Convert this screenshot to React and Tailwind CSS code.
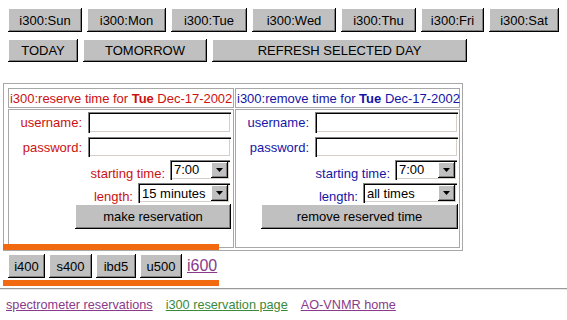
import React from 'react';

const btnCls =
  "flex items-center justify-center bg-[#c0c0c0] text-[13px] leading-none text-black shadow-[inset_-1px_-1px_0_#000,inset_1px_1px_0_#fff,inset_-2px_-2px_0_#808080]";

const fieldCls =
  "bg-white shadow-[inset_1px_1px_0_#808080,inset_2px_2px_0_#000,inset_-1px_-1px_0_#fff,inset_-2px_-2px_0_#d4d0c8]";

const days = [
  { label: "i300:Sun", w: "w-[74px]" },
  { label: "i300:Mon", w: "w-[79px]" },
  { label: "i300:Tue", w: "w-[76px]" },
  { label: "i300:Wed", w: "w-[84px]" },
  { label: "i300:Thu", w: "w-[75px]" },
  { label: "i300:Fri", w: "w-[63px]" },
  { label: "i300:Sat", w: "w-[70px]" },
];

const machines = [
  { label: "i400", w: "w-[37px]" },
  { label: "s400", w: "w-[43px]" },
  { label: "ibd5", w: "w-[40px]" },
  { label: "u500", w: "w-[42px]" },
];

const FakeSelect = ({ value, w }) => (
  <div className={`flex h-[20px] items-center p-[2px] ${w} ${fieldCls}`}>
    <span className="flex-1 pl-[2px] text-[13px] leading-none text-black">{value}</span>
    <span className={`flex h-[16px] w-[17px] items-center justify-center ${btnCls}`}>
      <svg width="7" height="4" viewBox="0 0 7 4">
        <path d="M0 0h7L3.5 4z" fill="#000" />
      </svg>
    </span>
  </div>
);

const FormCell = ({ color, timeW, lenW, lenValue, button, buttonW, pr }) => (
  <div className={`flex flex-col items-end border border-[#a8a8a8] pt-[2px] ${pr} text-[13px] leading-none ${color}`}>
    <div className="flex items-center gap-[6px]">
      <span>username:</span>
      <input type="text" className={`h-[21px] w-[143px] outline-none ${fieldCls}`} />
    </div>
    <div className="mt-[4px] flex items-center gap-[6px]">
      <span>password:</span>
      <input type="password" className={`h-[20px] w-[143px] outline-none ${fieldCls}`} />
    </div>
    <div className="mt-[2px] flex items-center gap-[5px] pr-[1px]">
      <span className="pt-[8px]">starting time:</span>
      <FakeSelect value="7:00" w={timeW} />
    </div>
    <div className="mt-[3px] flex items-center gap-[5px] pr-[1px]">
      <span className="pt-[6px]">length:</span>
      <FakeSelect value={lenValue} w={lenW} />
    </div>
    <button className={`mt-[1px] h-[25px] ${buttonW} ${btnCls}`}>{button}</button>
  </div>
);

export default function App() {
  return (
    <div className="h-[320px] w-[567px] overflow-hidden bg-white font-['Liberation_Sans',Arial,sans-serif] text-black">
      {/* day buttons */}
      <div className="ml-[8px] mt-[8px] flex gap-[5px]">
        {days.map((d) => (
          <button key={d.label} className={`h-[24px] ${d.w} ${btnCls}`}>
            {d.label}
          </button>
        ))}
      </div>
      <div className="ml-[8px] mt-[7px] flex gap-[5px]">
        <button className={`h-[23px] w-[70px] ${btnCls}`}>TODAY</button>
        <button className={`h-[23px] w-[124px] ${btnCls}`}>TOMORROW</button>
        <button className={`h-[23px] w-[255px] ${btnCls}`}>REFRESH SELECTED DAY</button>
      </div>

      {/* reservation table */}
      <div className="ml-[3px] mt-[21px] grid h-[168px] w-[460px] grid-cols-[226px_225px] grid-rows-[20px_139px] gap-x-[1px] gap-y-[1px] border border-[#a8a8a8] pb-[2px] pl-[4px] pr-[2px] pt-[4px]">
        <div className="flex items-center whitespace-nowrap border border-[#a8a8a8] pl-[1px] text-[13px] leading-none tracking-[-0.02px] text-[#cc1111]">
          i300:reserve time for&nbsp;<b>Tue</b>&nbsp;Dec-17-2002
        </div>
        <div className="flex items-center whitespace-nowrap border border-[#a8a8a8] pl-[1px] text-[13px] leading-none text-[#1515a5]">
          i300:remove time for&nbsp;<b>Tue</b>&nbsp;Dec-17-2002
        </div>
        <FormCell
          color="text-[#cc1111]"
          timeW="w-[60px]"
          lenW="w-[92px]"
          lenValue="15 minutes"
          button="make reservation"
          buttonW="w-[156px]"
          pr="pr-[2px]"
        />
        <FormCell
          color="text-[#1515a5]"
          timeW="w-[62px]"
          lenW="w-[94px]"
          lenValue="all times"
          button="remove reserved time"
          buttonW="w-[197px]"
          pr="pr-[1px]"
        />
      </div>

      <div className="relative ml-[3px] -mt-[7px] h-[6px] w-[216px] bg-[#f26a10]" />

      {/* machine buttons */}
      <div className="ml-[8px] mt-[4px] flex items-center gap-[4px]">
        {machines.map((m) => (
          <button key={m.label} className={`h-[24px] ${m.w} ${btnCls}`}>
            {m.label}
          </button>
        ))}
        <a href="#" className="ml-[1px] text-[16px] leading-none text-[#8a3a8a] underline">
          i600
        </a>
      </div>

      <div className="ml-[3px] mt-[2px] h-[6px] w-[216px] bg-[#f26a10]" />

      <div className="mt-[2px] h-[2px] w-full border-t border-b border-t-[#9a9a9a] border-b-[#e8e8e8]" />

      {/* footer links */}
      <div className="ml-[6px] mt-[9px] flex gap-[13px] text-[12.7px] leading-none">
        <a href="#" className="text-[#8a3a8a] underline">spectrometer reservations</a>
        <a href="#" className="text-[#3a8a3a] underline">i300 reservation page</a>
        <a href="#" className="text-[#8a3a8a] underline">AO-VNMR home</a>
      </div>
    </div>
  );
}
